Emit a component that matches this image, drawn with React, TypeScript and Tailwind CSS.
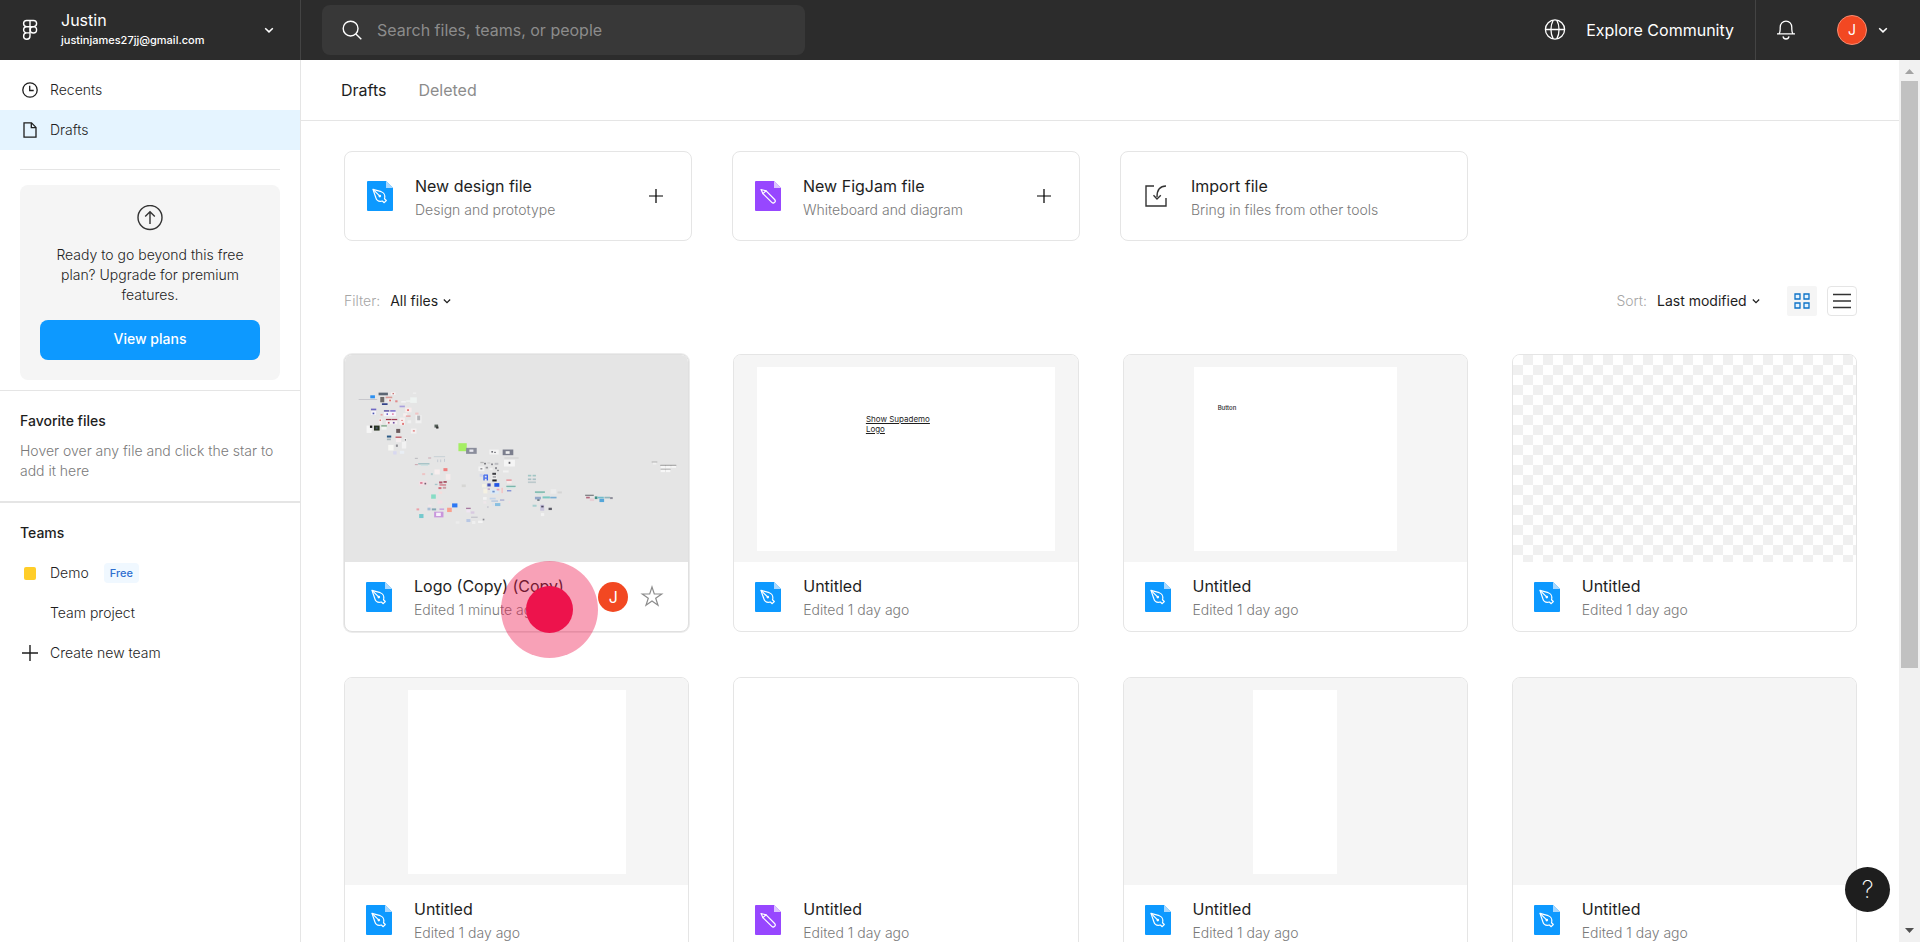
import { useState } from "react";

type FileKind = "design" | "figjam";

type FileItem = {
  id: number;
  title: string;
  edited: string;
  kind: FileKind;
  preview: "canvas" | "text" | "button" | "checker" | "square" | "blank" | "narrow" | "empty";
  active?: boolean;
};

const files: FileItem[] = [
  { id: 1, title: "Logo (Copy) (Copy)", edited: "Edited 1 minute ago", kind: "design", preview: "canvas", active: true },
  { id: 2, title: "Untitled", edited: "Edited 1 day ago", kind: "design", preview: "text" },
  { id: 3, title: "Untitled", edited: "Edited 1 day ago", kind: "design", preview: "button" },
  { id: 4, title: "Untitled", edited: "Edited 1 day ago", kind: "design", preview: "checker" },
  { id: 5, title: "Untitled", edited: "Edited 1 day ago", kind: "design", preview: "square" },
  { id: 6, title: "Untitled", edited: "Edited 1 day ago", kind: "figjam", preview: "blank" },
  { id: 7, title: "Untitled", edited: "Edited 1 day ago", kind: "design", preview: "narrow" },
  { id: 8, title: "Untitled", edited: "Edited 1 day ago", kind: "design", preview: "empty" },
];

// x, y, width, height, colour of every frame on the zoomed out canvas
const canvasFrames: [number, number, number, number, string][] = [
  // top left cluster
  [53, 161, 56, 2, "#b9b9c0"], [88, 149, 14, 9, "#2b8ff0"], [113, 141, 28, 8, "#5b6673"], [150, 140, 14, 8, "#f6f1f1"],
  [155, 142, 4, 4, "#c26a6a"], [118, 154, 12, 16, "#6d6a68"], [134, 153, 20, 5, "#d99a94"], [140, 159, 12, 9, "#f4eeee"],
  [145, 162, 5, 5, "#dd6161"], [163, 164, 7, 6, "#e08b8b"], [123, 173, 17, 5, "#2c3c86"], [176, 180, 16, 5, "#a99fdd"],
  [181, 166, 14, 5, "#f2f2f4"], [196, 164, 14, 5, "#eef1f0"], [208, 155, 20, 17, "#eef3f1"], [216, 140, 10, 5, "#ededed"],
  [90, 189, 16, 5, "#7069c4"], [91, 196, 14, 12, "#f5f3fa"], [95, 201, 5, 5, "#4e57b0"], [129, 194, 16, 4, "#4a3f9e"],
  [148, 194, 16, 4, "#6b5ccb"], [129, 199, 36, 13, "#f7f4fb"], [137, 203, 4, 5, "#5b4fc1"], [154, 203, 4, 5, "#d96d9a"],
  [119, 205, 6, 5, "#e7a4a4"], [193, 186, 19, 14, "#f7ebeb"], [199, 191, 5, 5, "#e15656"], [187, 203, 12, 10, "#f7efef"],
  [195, 210, 14, 3, "#e78a8a"], [223, 201, 10, 6, "#f1c4c4"], [224, 208, 18, 25, "#f1f1f1"], [229, 210, 9, 14, "#b4b4b8"],
  [114, 219, 10, 17, "#f6efef"], [116, 222, 4, 4, "#cc5f5f"], [135, 220, 16, 4, "#9c3344"], [152, 220, 17, 4, "#a33c55"],
  [135, 225, 34, 11, "#f7f1f3"], [141, 229, 5, 5, "#c54d5e"], [156, 229, 5, 5, "#6e4d9e"], [176, 216, 16, 23, "#f6eeee"],
  [181, 223, 5, 3, "#e38585"], [184, 232, 5, 6, "#de6a6a"], [200, 224, 11, 9, "#f0f0f0"],
  [77, 240, 15, 22, "#f6f6f6"], [87, 240, 7, 7, "#1e1e1e"], [99, 240, 17, 15, "#26331f"], [104, 244, 6, 7, "#454f5e"],
  [121, 239, 17, 4, "#7ca786"], [122, 244, 15, 8, "#f2f6f2"], [166, 250, 12, 12, "#6a5a5c"], [210, 249, 17, 15, "#f4f0f0"],
  [216, 254, 6, 4, "#e07b7b"], [138, 270, 13, 6, "#2a5a86"], [138, 279, 12, 5, "#a9b7bd"], [164, 273, 18, 4, "#c05b64"],
  [165, 278, 16, 12, "#f4eeef"], [189, 277, 8, 11, "#eeeeee"], [192, 281, 3, 4, "#55555b"], [142, 298, 16, 17, "#f7f7f4"],
  [165, 297, 6, 7, "#8d8d92"], [183, 289, 13, 20, "#f2f2f2"], [157, 317, 10, 10, "#d8d8f0"], [177, 316, 13, 9, "#e9eef4"],
  [281, 237, 11, 9, "#55605a"], [286, 243, 7, 6, "#2f2f2f"],
  // middle
  [353, 293, 25, 24, "#a5ee63"], [376, 307, 32, 18, "#8a8d9b"], [386, 312, 12, 7, "#e8e8ef"],
  [446, 312, 28, 15, "#f3f3f3"], [452, 317, 5, 4, "#55555c"], [460, 319, 6, 3, "#7b7b82"], [486, 312, 32, 17, "#7b7e8d"],
  [495, 317, 12, 8, "#f0f0f0"], [491, 336, 43, 3, "#cfcfcf"], [490, 343, 33, 20, "#f5f5f5"], [504, 349, 5, 6, "#5d5d63"],
  [487, 375, 17, 6, "#f2f2f2"], [222, 337, 9, 3, "#b9b9be"], [262, 336, 9, 3, "#c9a7b0"], [279, 332, 34, 3, "#c7d1d5"],
  [290, 342, 2, 8, "#b5bfcc"], [299, 342, 2, 8, "#b5bfcc"], [310, 340, 2, 9, "#b5bfcc"], [222, 356, 9, 3, "#c8a3ad"],
  [232, 353, 34, 4, "#9dbfc3"], [240, 358, 22, 3, "#c9e0e2"], [308, 368, 12, 9, "#ef7f7f"], [281, 372, 16, 15, "#f7eeee"],
  [244, 383, 9, 6, "#edc4c4"], [270, 383, 6, 6, "#b3cdd0"], [315, 386, 14, 17, "#f4ecec"], [235, 407, 24, 13, "#f4dfe5"],
  [238, 410, 7, 5, "#d8748f"], [251, 412, 5, 5, "#6b6070"], [295, 408, 10, 6, "#b2546a"], [308, 407, 10, 5, "#a0485a"],
  [282, 415, 8, 4, "#a8c5ca"], [296, 416, 20, 5, "#d38a96"], [293, 425, 9, 6, "#d1717d"], [306, 424, 10, 6, "#cb9da5"],
  [294, 438, 10, 7, "#f6dcdc"], [271, 447, 14, 13, "#86dcc5"], [290, 465, 15, 10, "#f1dfe5"],
  [227, 489, 8, 6, "#eca0a8"], [235, 506, 13, 12, "#74c9cd"], [260, 487, 9, 8, "#a8bed6"], [273, 489, 13, 6, "#86a8b5"],
  [262, 478, 10, 6, "#f2e5ea"], [280, 499, 28, 17, "#c896dc"], [286, 502, 14, 10, "#f6f0fa"], [296, 489, 14, 5, "#cba6de"],
  [319, 487, 14, 13, "#f9a08f"], [334, 474, 16, 12, "#2d78f4"], [363, 417, 12, 8, "#d6d6d4"],
  [345, 528, 11, 7, "#ececec"], [376, 487, 14, 4, "#a779a0"], [377, 493, 11, 8, "#efe5f2"], [390, 498, 11, 7, "#d8c9e0"],
  [377, 521, 12, 9, "#b8c7e4"], [391, 514, 20, 3, "#bcbcc4"], [394, 527, 10, 9, "#efefef"], [412, 526, 14, 7, "#f4f4f4"],
  [426, 520, 5, 5, "#88888f"], [439, 482, 5, 6, "#cfcfd6"],
  // centre cluster
  [419, 349, 10, 4, "#b8b8b8"], [430, 352, 6, 5, "#7c7c80"], [440, 350, 9, 5, "#d5d5d5"], [451, 354, 6, 5, "#8c8c92"],
  [462, 352, 11, 6, "#bdbdc1"], [413, 363, 18, 14, "#f3f3f3"], [419, 368, 6, 4, "#8a8a8f"], [435, 364, 7, 5, "#98989c"],
  [446, 368, 10, 6, "#f1f1f1"], [463, 365, 6, 6, "#8d8d93"], [470, 373, 4, 4, "#66666b"], [455, 382, 11, 6, "#3d3d42"],
  [453, 390, 15, 12, "#efefef"], [456, 393, 10, 3, "#77777c"], [455, 402, 13, 6, "#232328"], [417, 385, 9, 9, "#cfd5ee"],
  [428, 388, 4, 17, "#3b62ea"], [438, 388, 4, 17, "#3b62ea"], [430, 387, 11, 4, "#4d74f0"], [430, 396, 11, 4, "#4d74f0"],
  [440, 414, 10, 9, "#4653b5"], [461, 413, 15, 11, "#2457e6"], [424, 416, 12, 10, "#f4f2e4"], [428, 430, 12, 14, "#f5f1e2"],
  [441, 429, 7, 4, "#bb9fc9"], [449, 432, 25, 13, "#dbe9f6"], [455, 436, 7, 5, "#6f92cf"], [468, 430, 8, 5, "#f0a0b3"],
  [482, 427, 5, 16, "#f2c7c7"], [497, 402, 16, 4, "#e78b93"], [499, 407, 14, 7, "#f7ecec"], [497, 421, 28, 3, "#5fa99c"],
  [498, 425, 26, 3, "#c9e7e0"], [499, 434, 13, 4, "#7d8dd8"], [427, 455, 11, 8, "#f3f3f3"], [428, 467, 9, 8, "#eee7ea"],
  [447, 457, 18, 5, "#c3d4ea"], [452, 465, 20, 4, "#b3c7e0"], [463, 473, 16, 9, "#88bfe0"], [478, 462, 13, 4, "#a9aed2"],
  [454, 474, 7, 7, "#dbe3ee"], [504, 467, 5, 7, "#f1dfe3"],
  // right of centre
  [562, 388, 10, 5, "#a1c6c4"], [576, 388, 10, 5, "#a1c6c4"], [562, 399, 10, 5, "#a9bfc4"], [576, 399, 10, 5, "#a9bfc4"],
  [562, 408, 24, 5, "#bcc9cc"], [583, 438, 30, 4, "#69b3a5"], [587, 443, 20, 4, "#d3e5e1"], [630, 431, 17, 14, "#ececec"],
  [651, 438, 13, 6, "#d5d5d5"], [583, 454, 18, 8, "#93a7c8"], [590, 462, 7, 4, "#4e5a66"], [606, 453, 22, 6, "#7cc8c2"],
  [629, 454, 19, 5, "#7aaed3"], [576, 478, 12, 6, "#a7cfcf"], [599, 478, 12, 18, "#c9c5dd"], [602, 481, 7, 5, "#4b4660"],
  [624, 487, 10, 7, "#5c5c66"], [601, 503, 10, 9, "#f2f2f2"],
  [734, 448, 26, 3, "#63666b"], [737, 454, 11, 5, "#b4687d"], [748, 459, 13, 8, "#e7cfd5"], [763, 453, 8, 8, "#3f8e85"],
  [772, 454, 18, 5, "#70bccb"], [777, 460, 14, 10, "#55a6d9"], [792, 454, 17, 5, "#91b6bd"], [809, 455, 8, 6, "#8d8d99"],
  [934, 348, 17, 3, "#b2b2b2"], [938, 352, 10, 5, "#f1f1f1"], [960, 358, 48, 3, "#8d8d8d"], [961, 361, 14, 8, "#f7f7f7"],
  [977, 361, 14, 8, "#f7f7f7"], [993, 361, 14, 6, "#f7f7f7"], [961, 370, 30, 2, "#8d8d8d"], [961, 373, 13, 7, "#f7f7f7"],
  [977, 373, 13, 7, "#f7f7f7"],
];

const FileIcon = ({ kind }: { kind: FileKind }) => (
  <svg width="26" height="30" viewBox="0 0 26 30" fill="none" className="shrink-0" aria-hidden="true">
    <path
      d="M1 0h18l7 7v22a1 1 0 0 1-1 1H1a1 1 0 0 1-1-1V1a1 1 0 0 1 1-1Z"
      fill={kind === "design" ? "#0d99ff" : "#9747ff"}
    />
    <path d="M19 0l7 7h-7V0Z" fill={kind === "design" ? "#a8d8ff" : "#dcc4ff"} />
    {kind === "design" ? (
      <g stroke="#fff" strokeWidth="1.2" strokeLinejoin="round" strokeLinecap="round">
        <path d="M6 8.4l8.2 2.3c2.6.8 4 3.6 3.5 6.200l-.2.9 1.800 1.700-2.100 2.200-1.800-1.700-.9.2c-2.700.4-5.100-1.300-5.800-3.900L6 8.400Z" />
        <path d="M6.300 8.700l5.500 5.500" />
        <circle cx="12.800" cy="15.100" r="1.300" fill="#fff" stroke="none" />
      </g>
    ) : (
      <g stroke="#fff" strokeWidth="1.2" strokeLinejoin="round" strokeLinecap="round">
        <path d="M6 8.500l5.100 1.300 8.500 8.700c.8.800.8 2 0 2.800s-2 .8-2.800 0l-8.900-8.700L6 8.500Z" />
        <path d="M7.900 12.600l3.200-2.800" />
      </g>
    )}
  </svg>
);

const Chevron = ({ size = 12 }: { size?: number }) => (
  <svg width={size} height={size} viewBox="0 0 12 12" fill="none" className="shrink-0" aria-hidden="true">
    <path d="M2.200 4.200L6 7.900l3.800-3.700" stroke="currentColor" strokeWidth="1.500" />
  </svg>
);

const PlusIcon = ({ size }: { size: number }) => (
  <svg width={size} height={size} viewBox="0 0 16 16" fill="none" className="shrink-0" aria-hidden="true">
    <path d="M8 0v16M0 8h16" stroke="currentColor" strokeWidth="1.400" />
  </svg>
);

const Header = () => (
  <header className="flex h-15 shrink-0 items-stretch bg-[#2c2c2c] text-white">
    <button type="button" className="flex w-[301px] shrink-0 items-center border-r border-[#444444] pl-5 pr-[25px] text-left">
      <svg width="20" height="24" viewBox="0 0 20 24" fill="none" stroke="#fff" strokeWidth="1.400" aria-hidden="true">
        <path d="M10 2.500H6.700a3.100 3.100 0 0 0 0 6.200H10V2.500ZM10 2.500h3.500a3.100 3.100 0 0 1 0 6.200H10M10 8.700H6.700a3.100 3.100 0 0 0 0 6.200H10V8.700ZM10 14.900H6.700a3.200 3.200 0 1 0 3.300 3.200v-3.200Z" />
        <circle cx="13.400" cy="11.800" r="3.200" />
      </svg>
      <span className="ml-[21px] flex flex-1 flex-col">
        <span className="text-base leading-5">Justin</span>
        <span className="text-[11px] font-medium leading-5">justinjames27jj@gmail.com</span>
      </span>
      <Chevron />
    </button>

    <div className="flex flex-1 items-center justify-between pl-[21px]">
      <label className="flex h-[50px] w-[483px] items-center gap-[15px] rounded-lg bg-[#383838] px-5">
        <svg width="20" height="20" viewBox="0 0 20 20" fill="none" stroke="#fff" strokeWidth="1.400" aria-hidden="true">
          <circle cx="8.600" cy="8.600" r="7.400" />
          <path d="M13.900 13.900l5.400 5.400" />
        </svg>
        <input
          type="text"
          aria-label="Search"
          placeholder="Search files, teams, or people"
          className="flex-1 bg-transparent text-base outline-none placeholder:text-[#8c8c8c]"
        />
      </label>

      <div className="flex h-full items-stretch">
        <a href="#community" className="flex items-center gap-5 pr-[21px] text-base">
          <svg width="22" height="22" viewBox="0 0 22 22" fill="none" stroke="#fff" strokeWidth="1.300" aria-hidden="true">
            <circle cx="11" cy="10.500" r="9.600" />
            <path d="M1.400 10.500h19.200M9.200 1.200C6.200 6.500 6.200 14.500 9.200 19.800M12.800 1.200c3 5.300 3 13.300 0 18.600" />
          </svg>
          Explore Community
        </a>
        <button type="button" aria-label="Notifications" className="flex items-center border-l border-[#444444] pl-5">
          <svg width="20" height="22" viewBox="0 0 20 22" fill="none" stroke="#fff" strokeWidth="1.300" aria-hidden="true">
            <path d="M1 14.800h18M3 14.800c.9-1.300 1.200-2.600 1.200-4.600V8.400C4.200 4.900 6.600 2.100 10 2.100s5.800 2.800 5.800 6.300v1.800c0 2 .3 3.300 1.200 4.600M7 17.300c.3 1.700 1.400 2.700 3 2.700s2.700-1 3-2.700" />
          </svg>
        </button>
        <button type="button" aria-label="Account" className="flex items-center gap-2.5 pl-[41px] pr-[31px]">
          <span className="flex size-[30px] items-center justify-center rounded-full border border-[#f78c72] bg-[#f24822] text-sm">
            J
          </span>
          <Chevron />
        </button>
      </div>
    </div>
  </header>
);

const Sidebar = () => (
  <aside className="flex w-[301px] shrink-0 flex-col border-r border-[#e5e5e5] text-sm font-light text-[#1e1e1e]">
    <nav className="pt-2.5">
      <a href="#recents" className="flex h-10 items-center gap-3 pl-[22px]">
        <svg width="16" height="16" viewBox="0 0 16 16" fill="none" stroke="currentColor" strokeWidth="1.300" aria-hidden="true">
          <circle cx="8" cy="8" r="7.200" />
          <path d="M7.700 3.800v4.700h4" />
        </svg>
        Recents
      </a>
      <a href="#drafts" className="flex h-10 items-center gap-3 bg-[#e5f4ff] pl-[22px]">
        <svg width="16" height="16" viewBox="0 0 16 16" fill="none" stroke="currentColor" strokeWidth="1.300" aria-hidden="true">
          <path d="M2 .9h7.500L14 5.400v9.700H2V.9ZM9.300.9v4.700H14" />
        </svg>
        Drafts
      </a>
    </nav>

    <div className="mx-5 mt-[19px] border-t border-[#e5e5e5]" />

    <div className="mx-5 mb-2.5 mt-[15px] flex flex-col items-center rounded-lg bg-[#f5f5f5] p-5 text-center">
      <svg width="26" height="26" viewBox="0 0 26 26" fill="none" stroke="#333" strokeWidth="1.400" aria-hidden="true">
        <circle cx="13" cy="12.500" r="12" />
        <path d="M13 19V7M8.200 11.500L13 6.800l4.800 4.700" />
      </svg>
      <p className="mt-3.5 leading-5">Ready to go beyond this free plan? Upgrade for premium features.</p>
      <button type="button" className="mt-[15px] h-10 w-full rounded-lg bg-[#0d99ff] pb-0.5 font-medium text-white">
        View plans
      </button>
    </div>

    <section className="border-t border-[#e5e5e5] px-5 pb-5 pt-5">
      <h2 className="font-medium leading-5">Favorite files</h2>
      <p className="mt-2.5 leading-5 text-[#7a7a7a]">Hover over any file and click the star to add it here</p>
    </section>

    <section className="border-t-2 border-[#e5e5e5] pt-5">
      <h2 className="px-5 font-medium leading-5">Teams</h2>
      <ul className="mt-2.5">
        <li>
          <a href="#demo" className="flex h-10 items-center pl-6">
            <span className="mr-3.5 h-[13px] w-3 rounded-xs bg-[#ffcd29]" />
            Demo
            <span className="ml-[15px] rounded-sm bg-[#f0f8ff] px-1.5 text-[11px] font-medium leading-5 text-[#2f6fd0]">Free</span>
          </a>
        </li>
        <li>
          <a href="#team-project" className="flex h-10 items-center pl-[50px]">Team project</a>
        </li>
        <li>
          <button type="button" className="flex h-10 w-full items-center gap-3 pl-[22px]">
            <PlusIcon size={16} />
            Create new team
          </button>
        </li>
      </ul>
    </section>
  </aside>
);

const NewFileCard = ({ title, text, kind }: { title: string; text: string; kind?: FileKind }) => (
  <button
    type="button"
    className="flex h-[90px] w-[348px] items-center rounded-lg border border-[#e5e5e5] bg-white pl-[22px] pr-7 text-left"
  >
    {kind ? (
      <FileIcon kind={kind} />
    ) : (
      <svg width="26" height="26" viewBox="0 0 26 26" fill="none" stroke="#333" strokeWidth="1.400" aria-hidden="true">
        <path d="M11 3H3v20h20v-8M23 3c-5 0-9 3-9 11M10.500 12.300l3.500 3.700 3.800-3.700" />
      </svg>
    )}
    <span className="ml-[22px] flex flex-1 flex-col pt-1">
      <span className="text-base leading-6 text-[#1e1e1e]">{title}</span>
      <span className="text-sm font-light leading-6 text-[#7a7a7a]">{text}</span>
    </span>
    {kind && <PlusIcon size={14} />}
  </button>
);

const Preview = ({ type }: { type: FileItem["preview"] }) => {
  if (type === "canvas") {
    return (
      <div className="h-[207px] overflow-hidden rounded-t-[7px] bg-[#e5e5e5]">
        <svg viewBox="12 27 1032 624" className="size-full" preserveAspectRatio="xMidYMid slice" aria-hidden="true">
          {canvasFrames.map(([x, y, w, h, color], index) => (
            <rect key={index} x={x} y={y} width={w} height={h} fill={color} />
          ))}
        </svg>
      </div>
    );
  }
  if (type === "checker") {
    return (
      <div className="h-[207px] rounded-t-[7px] bg-[conic-gradient(#f0f0f0_25%,#ffffff_0_50%,#f0f0f0_0_75%,#ffffff_0)] bg-[length:20px_20px]" />
    );
  }
  if (type === "blank") {
    return <div className="h-[207px] rounded-t-[7px] bg-white" />;
  }
  return (
    <div className="flex h-[207px] items-center justify-center rounded-t-[7px] bg-[#f5f5f5]">
      {type === "text" && (
        <div className="h-[184px] w-[298px] bg-white pl-[109px] pt-[47px]">
          <p className="w-18 text-[8px] leading-[10px] text-[#1e1e1e] underline">Show Supademo Logo</p>
        </div>
      )}
      {type === "button" && (
        <div className="h-[184px] w-[203px] bg-white pl-6 pt-9">
          <p className="text-[6px] font-medium leading-[10px] text-[#1e1e1e]">Button</p>
        </div>
      )}
      {type === "square" && <div className="h-[184px] w-[218px] bg-white" />}
      {type === "narrow" && <div className="h-[184px] w-[84px] bg-white" />}
    </div>
  );
};

const FileCard = ({ file }: { file: FileItem }) => (
  <article
    className={
      file.active
        ? "relative rounded-lg border border-[#e0e0e0] bg-white shadow-[0_0_0_1px_#ececec]"
        : "rounded-lg border border-[#e5e5e5] bg-white"
    }
  >
    <Preview type={file.preview} />
    <div className="flex h-[69px] items-center pl-[21px] pr-6">
      <FileIcon kind={file.kind} />
      <div className="ml-[22px] flex-1 pt-0.5">
        <h3 className="text-base leading-6 text-[#1e1e1e]">{file.title}</h3>
        <p className="text-sm font-light leading-6 text-[#7a7a7a]">{file.edited}</p>
      </div>
      {file.active && (
        <>
          <span className="z-20 flex size-[30px] items-center justify-center rounded-full bg-[#f24822] text-base text-white">
            J
          </span>
          <button type="button" aria-label="Add to favorites" className="ml-3">
            <svg width="24" height="24" viewBox="0 0 24 24" fill="none" stroke="#8c8c8c" strokeWidth="1.200" aria-hidden="true">
              <path d="M12 2l2.300 7h7.400l-6 4.300 2.300 7L12 16l-6 4.300 2.300-7-6-4.300h7.400L12 2Z" />
            </svg>
          </button>
        </>
      )}
    </div>
    {/* click marker */}
    {file.active && (
      <span className="absolute -bottom-[27px] right-[90px] z-10 flex size-[97px] items-center justify-center rounded-full bg-[#ed134c]/40">
        <span className="size-[47px] rounded-full bg-[#ed134c]" />
      </span>
    )}
  </article>
);

const App = () => {
  const [filter, setFilter] = useState("All files");
  const [sort, setSort] = useState("Last modified");

  return (
    <div className="flex h-screen flex-col overflow-hidden bg-white font-['Inter',sans-serif]">
      <Header />
      <div className="flex min-h-0 flex-1">
        <Sidebar />

        <main className="min-w-0 flex-1 overflow-hidden">
          <div className="flex h-[61px] items-center gap-8 border-b border-[#e5e5e5] pl-10 text-base">
            <a href="#drafts" className="text-[#1e1e1e]">Drafts</a>
            <a href="#deleted" className="text-[#8c8c8c]">Deleted</a>
          </div>

          <div className="pl-[43px] pr-[42px] pt-[30px]">
            <div className="flex flex-wrap gap-10">
              <NewFileCard title="New design file" text="Design and prototype" kind="design" />
              <NewFileCard title="New FigJam file" text="Whiteboard and diagram" kind="figjam" />
              <NewFileCard title="Import file" text="Bring in files from other tools" />
            </div>

            <div className="mt-[45px] flex items-center justify-between text-sm text-[#1e1e1e]">
              <div className="flex items-center">
                <label htmlFor="filter" className="mr-2.5 font-light text-[#a6a6a6]">Filter:</label>
                <select
                  id="filter"
                  value={filter}
                  onChange={(e) => setFilter(e.target.value)}
                  className="mr-1 appearance-none bg-transparent outline-none"
                >
                  <option>All files</option>
                </select>
                <Chevron size={10} />
              </div>
              <div className="flex items-center">
                <label htmlFor="sort" className="mr-2.5 font-light text-[#a6a6a6]">Sort:</label>
                <select
                  id="sort"
                  value={sort}
                  onChange={(e) => setSort(e.target.value)}
                  className="mr-1 appearance-none bg-transparent outline-none"
                >
                  <option>Last modified</option>
                </select>
                <Chevron size={10} />
                <button type="button" aria-label="Show as grid" className="ml-[26px] flex size-[30px] items-center justify-center rounded-xs bg-[#f5f5f5]">
                  <svg width="16" height="16" viewBox="0 0 16 16" fill="#e5f4ff" stroke="#0d72c7" strokeWidth="1.300" aria-hidden="true">
                    <path d="M1 1h5v5H1V1ZM10 1h5v5h-5V1ZM1 10h5v5H1v-5ZM10 10h5v5h-5v-5Z" />
                  </svg>
                </button>
                <button type="button" aria-label="Show as list" className="ml-2.5 flex size-[30px] items-center justify-center rounded-sm border border-[#e5e5e5]">
                  <svg width="18" height="16" viewBox="0 0 18 16" fill="none" stroke="#333" strokeWidth="1.300" aria-hidden="true">
                    <path d="M0 1.500h18M0 8h18M0 14.500h18" />
                  </svg>
                </button>
              </div>
            </div>

            <div className="mt-[38px] grid grid-cols-4 gap-x-11 gap-y-[45px]">
              {files.map((file) => (
                <FileCard key={file.id} file={file} />
              ))}
            </div>
          </div>
        </main>

        {/* scrollbar */}
        <div className="flex w-[21px] shrink-0 flex-col items-center bg-[#f1f1f1]" aria-hidden="true">
          <svg width="21" height="21" viewBox="0 0 21 21">
            <path d="M6 14l4.500-5 4.500 5H6Z" fill="#a3a3a3" />
          </svg>
          <div className="w-[17px] flex-[587] bg-[#c1c1c1]" />
          <div className="flex-[253]" />
          <svg width="21" height="21" viewBox="0 0 21 21">
            <path d="M6 7l4.500 5L15 7H6Z" fill="#505050" />
          </svg>
        </div>
      </div>

      <button
        type="button"
        aria-label="Help"
        className="absolute bottom-[30px] right-[30px] flex size-[45px] items-center justify-center rounded-full bg-[#1e1e1e] text-2xl font-extralight text-white"
      >
        ?
      </button>
    </div>
  );
};

export default App;
